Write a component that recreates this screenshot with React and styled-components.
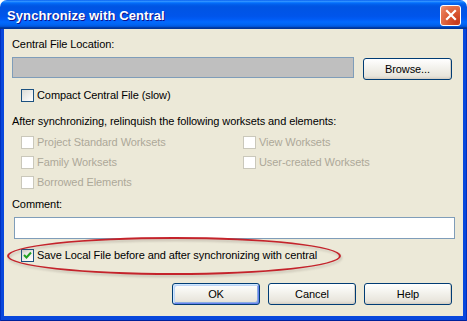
import React from "react";
import styled, { createGlobalStyle } from "styled-components";

const GlobalStyle = createGlobalStyle`
  html, body {
    margin: 0;
    padding: 0;
    background: #ffffff;
  }
  body {
    font-family: "Liberation Sans", Arial, sans-serif;
    font-size: 11px;
    letter-spacing: -0.08px;
  }
`;

function Check({ checked, disabled }) {
  return (
    <Box $disabled={disabled}>
      {checked && (
        <svg width="9" height="9" viewBox="0 0 9 9">
          <path
            d="M1 4 L3.5 6.5 L8 1.5"
            fill="none"
            stroke="#21a121"
            strokeWidth="2"
          />
        </svg>
      )}
    </Box>
  );
}

function Option({ label, checked, disabled }) {
  return (
    <CheckRow>
      <Check checked={checked} disabled={disabled} />
      <CheckLabel $disabled={disabled}>{label}</CheckLabel>
    </CheckRow>
  );
}

export default function App() {
  return (
    <>
      <GlobalStyle />
      <Window>
        <TitleBar>
          <Title>Synchronize with Central</Title>
          <CloseButton>
            <svg width="12" height="12" viewBox="0 0 12 12">
              <path
                d="M2 2 L10 10 M10 2 L2 10"
                stroke="#ffffff"
                strokeWidth="2.2"
                strokeLinecap="square"
              />
            </svg>
          </CloseButton>
        </TitleBar>
        <Frame>
          <Body>
            <Label>Central File Location:</Label>
            <LocationRow>
              <LocationField />
              <Button $width={89}>Browse...</Button>
            </LocationRow>
            <Indented $top={9}>
              <Option label="Compact Central File (slow)" />
            </Indented>
            <Label $top={13}>
              After synchronizing, relinquish the following worksets and
              elements:
            </Label>
            <OptionGrid>
              <Option label="Project Standard Worksets" disabled />
              <Option label="View Worksets" disabled />
              <Option label="Family Worksets" disabled />
              <Option label="User-created Worksets" disabled />
              <Option label="Borrowed Elements" disabled />
            </OptionGrid>
            <Label $top={6}>Comment:</Label>
            <CommentField />
            <Indented $top={10}>
              <Option
                label="Save Local File before and after synchronizing with central"
                checked
              />
            </Indented>
            <Highlight />
            <Buttons>
              <Button $default>OK</Button>
              <Button>Cancel</Button>
              <Button>Help</Button>
            </Buttons>
          </Body>
        </Frame>
      </Window>
    </>
  );
}

const Window = styled.div`
  width: 467px;
  height: 321px;
  display: flex;
  flex-direction: column;
  border-radius: 7px 7px 0 0;
  overflow: hidden;
`;

const TitleBar = styled.div`
  height: 29px;
  flex: none;
  display: flex;
  align-items: center;
  justify-content: space-between;
  padding: 0 6px 0 7px;
  background: linear-gradient(
    to bottom,
    #0058ee 0%,
    #3593ff 4%,
    #288eff 6%,
    #127dff 8%,
    #036ffc 10%,
    #0262ee 14%,
    #0057e5 20%,
    #0054e3 24%,
    #0055eb 56%,
    #005bf5 66%,
    #026afe 76%,
    #0062ef 86%,
    #0052d6 92%,
    #0040ab 94%,
    #003092 100%
  );
`;

const Title = styled.div`
  font-family: "Liberation Sans", Arial, sans-serif;
  font-weight: bold;
  font-size: 13px;
  letter-spacing: 0.1px;
  color: #ffffff;
  text-shadow: 1px 1px #0f1089;
  margin-top: 1px;
`;

const CloseButton = styled.div`
  width: 19px;
  height: 19px;
  margin-top: 1px;
  display: flex;
  align-items: center;
  justify-content: center;
  border: 1px solid #ffffff;
  border-radius: 3px;
  background: radial-gradient(
    circle at 85% 85%,
    #c83a1c 0%,
    #d8552f 40%,
    #e87a56 80%,
    #f09a7c 100%
  );
`;

const Frame = styled.div`
  flex: 1;
  display: flex;
  padding: 0 4px 5px 4px;
  background: #0847dc;
  box-shadow: inset 1px 0 #0030c0, inset -1px 0 #0030c0, inset 0 -1px #00209a;
`;

const Body = styled.div`
  position: relative;
  flex: 1;
  background: #ece9d8;
  padding: 9px 11px 0 8px;
  color: #000000;
`;

const Label = styled.div`
  line-height: 13px;
  margin-top: ${(p) => p.$top || 0}px;
  white-space: nowrap;
`;

const LocationRow = styled.div`
  display: flex;
  align-items: flex-start;
  gap: 9px;
  margin-top: 6px;
  > :last-child {
    margin-top: 1px;
  }
`;

const LocationField = styled.div`
  flex: 1;
  height: 19px;
  border: 1px solid #7f9db9;
  background: #bfbfbf;
`;

const Indented = styled.div`
  padding-left: 9px;
  margin-top: ${(p) => p.$top || 0}px;
`;

const CheckRow = styled.div`
  display: flex;
  align-items: center;
  gap: 3px;
  height: 13px;
`;

const Box = styled.div`
  width: 11px;
  height: 11px;
  flex: none;
  display: flex;
  align-items: center;
  justify-content: center;
  border: 1px solid ${(p) => (p.$disabled ? "#cac8bb" : "#1c5180")};
  background: ${(p) =>
    p.$disabled ? "#ffffff" : "linear-gradient(135deg, #dcdcd7, #ffffff)"};
`;

const CheckLabel = styled.span`
  line-height: 13px;
  white-space: nowrap;
  color: ${(p) => (p.$disabled ? "#aca899" : "#000000")};
`;

const OptionGrid = styled.div`
  display: grid;
  grid-template-columns: 222px 1fr;
  grid-auto-rows: 20px;
  align-items: center;
  padding-left: 9px;
  margin-top: 4px;
`;

const CommentField = styled.div`
  height: 20px;
  margin: 6px -3px 0 2px;
  border: 1px solid #7f9db9;
  background: #ffffff;
`;

const Highlight = styled.div`
  position: absolute;
  left: 3px;
  top: 208px;
  width: 330px;
  height: 34px;
  border: 2px solid #c4232b;
  border-radius: 50%;
  filter: drop-shadow(1px 2px 1px rgba(120, 110, 100, 0.35));
`;

const Buttons = styled.div`
  display: flex;
  justify-content: flex-end;
  gap: 8px;
  margin-top: 21px;
`;

const Button = styled.div`
  width: ${(p) => p.$width || 88}px;
  height: 22px;
  box-sizing: border-box;
  display: flex;
  align-items: center;
  justify-content: center;
  border: 1px solid #003c74;
  border-radius: 3px;
  background: linear-gradient(to bottom, #ffffff 0%, #f4f3ee 40%, #e8e5dc 85%, #d6d0c5 100%);
  box-shadow: ${(p) =>
    p.$default
      ? "inset 1px 1px #cee7ff, inset -1px -1px #6982ee, inset 2px 2px #bcd4f6, inset -2px -2px #89ade4"
      : "inset -1px -1px #d6d0c5"};
  font-size: 11px;
  color: #000000;
`;
